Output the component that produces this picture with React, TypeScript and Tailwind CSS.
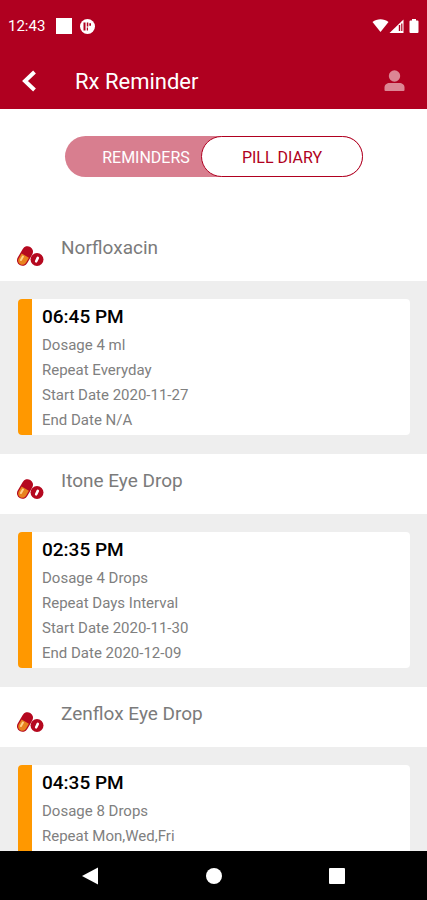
type Reminder = {
  name: string;
  time: string;
  details: string[];
};

const reminders: Reminder[] = [
  {
    name: 'Norfloxacin',
    time: '06:45 PM',
    details: ['Dosage 4 ml', 'Repeat Everyday', 'Start Date 2020-11-27', 'End Date N/A'],
  },
  {
    name: 'Itone Eye Drop',
    time: '02:35 PM',
    details: ['Dosage 4 Drops', 'Repeat Days Interval', 'Start Date 2020-11-30', 'End Date 2020-12-09'],
  },
  {
    name: 'Zenflox Eye Drop',
    time: '04:35 PM',
    details: ['Dosage 8 Drops', 'Repeat Mon,Wed,Fri'],
  },
];

const PillIcon = () => (
  <svg width="28" height="22" viewBox="0 0 28 22" aria-hidden="true">
    <g transform="rotate(30 9 11)">
      <rect x="3.500" y="0.500" width="11" height="21" rx="5.500" fill="#b5081f" />
      <path d="M4.800 10.500h8.400v5.800a4.200 4.200 0 0 1-8.400 0z" fill="#e8821e" />
      <path d="M7.500 12.500v4" stroke="#ffd08a" strokeWidth="2" strokeLinecap="round" />
    </g>
    <circle cx="21" cy="14.500" r="6.500" fill="#b5081f" />
    <path d="M20.200 16.300l1.600-3.400" stroke="#fff" strokeWidth="2.600" strokeLinecap="round" />
  </svg>
);

const StatusBar = () => (
  <div className="flex h-13 items-center justify-between pl-2 pr-[7px]">
    <div className="flex items-center">
      <span className="w-12 text-[15px]">12:43</span>
      <span className="h-4 w-4 bg-white" />
      <svg className="ml-2" width="15" height="15" viewBox="0 0 15 15" aria-hidden="true">
        <circle cx="7.500" cy="7.500" r="7.500" fill="#fff" />
        <path d="M3.500 3.500h2v8h-2zM6.800 3.500h1.500v4h-1.500zM9.300 4.200h1.700v2.600h-1.700zM6.800 8.500h1.200v3h-1.200z" fill="#b00020" />
      </svg>
    </div>
    <svg width="48" height="16" viewBox="0 0 48 16" fill="#fff" aria-hidden="true">
      <path d="M0.500 4C5 0.200 12 0.200 16.500 4L8.500 14z" />
      <path d="M17.500 15L31.500 1.500V15z" />
      <path d="M26.800 7h1.400v6h-1.400zM29.200 5.500h1.200v7.500h-1.200z" fill="#b00020" />
      <path d="M40 1h4v1.500h1.500q1 0 1 1V14q0 1-1 1h-7q-1 0-1-1V3.500q0-1 1-1H40z" />
    </svg>
  </div>
);

const ReminderSection = ({ reminder }: { reminder: Reminder }) => (
  <section>
    <div className="flex h-15 items-start gap-4 pl-4 pt-[13px]">
      <div className="pt-[11px]">
        <PillIcon />
      </div>
      <h2 className="pl-px text-[19px] leading-7 text-[#7b7b7b]">{reminder.name}</h2>
    </div>
    <div className="bg-[#eeeeee] pb-[19px] pl-[18px] pr-[17px] pt-[18px]">
      <div className="flex min-h-[136px] overflow-hidden rounded-[4px] bg-white">
        <div className="w-3.5 shrink-0 bg-[#ff9800]" />
        <div className="px-2.5 pb-0.5 pt-1">
          <h3 className="text-[19px] font-medium leading-7 text-black">{reminder.time}</h3>
          <div className="pt-0.5 text-[15px] leading-[25px] text-[#808080]">
            {reminder.details.map((detail) => (
              <p key={detail}>{detail}</p>
            ))}
          </div>
        </div>
      </div>
    </div>
  </section>
);

const NavigationBar = () => (
  <nav className="flex h-[49px] shrink-0 items-center justify-center gap-[107px] bg-black pr-0.5">
    <button type="button" aria-label="Back">
      <svg width="18" height="18" viewBox="0 0 18 18" fill="#fff">
        <path d="M1 9L17 0.500v17z" />
      </svg>
    </button>
    <button type="button" aria-label="Home">
      <span className="block h-4 w-4 rounded-full bg-white" />
    </button>
    <button type="button" aria-label="Recent apps">
      <span className="block h-4 w-4 rounded-[1px] bg-white" />
    </button>
  </nav>
);

const App = () => {
  return (
    <div className="flex h-screen flex-col bg-white font-['Roboto',sans-serif]">
      <header className="shrink-0 bg-[#b00020] text-white">
        <StatusBar />
        <div className="flex h-[57px] items-center pl-5 pr-[22px]">
          <button type="button" aria-label="Go back" className="w-[55px]">
            <svg width="18" height="22" viewBox="0 0 18 22" fill="none" stroke="#fff" strokeWidth="4">
              <path d="M14.500 2L5 11L14.500 20" />
            </svg>
          </button>
          <h1 className="flex-1 pt-0.5 text-[22px]">Rx Reminder</h1>
          <button type="button" aria-label="Profile">
            <svg width="21" height="21" viewBox="0 0 21 21" fill="#dc8694">
              <circle cx="10.500" cy="6" r="5.700" />
              <path d="M0.500 20v-2.500C0.500 14.500 3 13 5.500 13h10c2.500 0 5 1.500 5 4.500V20q0 1-1 1h-18q-1 0-1-1z" />
            </svg>
          </button>
        </div>
      </header>

      <main className="flex-1 overflow-hidden">
        {/* Tabs */}
        <div className="pb-11 pl-[65px] pr-16 pt-[27px]">
          <div role="tablist" className="flex h-[41px] rounded-full bg-[#d87e8f] text-base">
            <button type="button" role="tab" aria-selected="false" className="flex-1 pl-[26px] pt-0.5 text-white">
              REMINDERS
            </button>
            <button
              type="button"
              role="tab"
              aria-selected="true"
              className="w-[162px] rounded-full border border-[#b00020] bg-white pt-0.5 text-[#b00020]"
            >
              PILL DIARY
            </button>
          </div>
        </div>

        {/* Reminders */}
        {reminders.map((reminder) => (
          <ReminderSection key={reminder.name} reminder={reminder} />
        ))}
      </main>

      <NavigationBar />
    </div>
  );
};

export default App;
